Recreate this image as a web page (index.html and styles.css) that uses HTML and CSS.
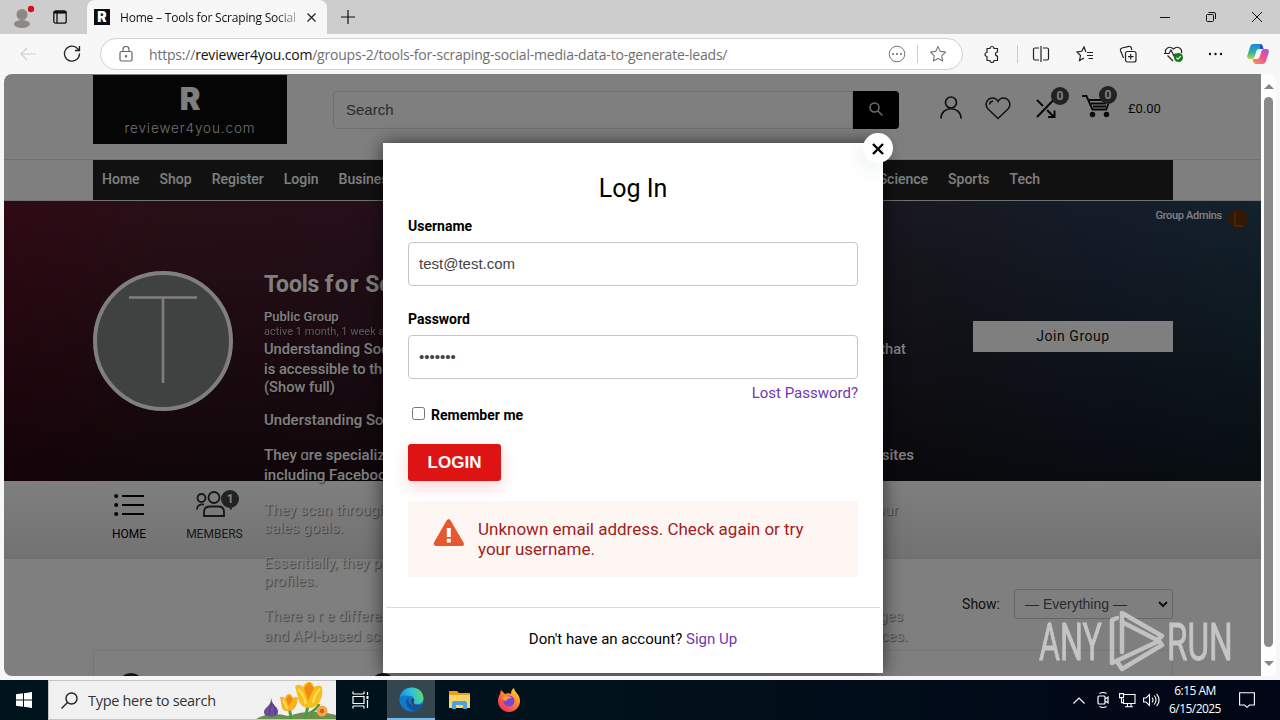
FILE: index.html
```html
<!DOCTYPE html>
<html lang="en">
<head>
    <meta charset="UTF-8">
    <title>Home – Tools for Scraping Social</title>
    <meta name="viewport" content="width=device-width, initial-scale=1.0">
    <link rel="stylesheet" href="styles.css">
</head>

<body>
    <div class="tabstrip">
        <svg class="profile" width="26" height="30" viewBox="0 0 26 30">
            <circle cx="13" cy="12.500" r="5.500" fill="#8c8884"/>
            <ellipse cx="13" cy="22" rx="8" ry="4" fill="#8c8884"/>
            <circle cx="22" cy="7" r="3.200" fill="#d4101f"/>
        </svg>
        <svg class="workspaces" width="14" height="14" viewBox="0 0 14 14" fill="none" stroke="#111" stroke-width="1.300">
            <rect x=".8" y=".8" width="12.400" height="12.400" rx="2"/>
            <path d="M1 2.300h12" stroke-width="2.600"/><path d="M4 3v10"/>
        </svg>
        <div class="tab">
            <span class="favicon">R</span>
            <span class="tab-title">Home – Tools for Scraping Social</span>
            <svg width="9" height="9" viewBox="0 0 9 9" stroke="#222" stroke-width="1.200"><path d="M.5.5l8 8M8.500.5l-8 8"/></svg>
        </div>
        <svg class="new-tab" width="14" height="14" viewBox="0 0 14 14" stroke="#111" stroke-width="1.200"><path d="M7 0v14M0 7h14"/></svg>
        <div class="window-buttons">
            <svg width="10" height="10" viewBox="0 0 10 10" stroke="#111"><path d="M0 5.500h10"/></svg>
            <svg width="10" height="10" viewBox="0 0 10 10" stroke="#111" fill="none"><rect x=".5" y="2.500" width="7" height="7" rx="1"/><path d="M2.500.5H8a1.500 1.500 0 0 1 1.500 1.500v5"/></svg>
            <svg width="10" height="10" viewBox="0 0 10 10" stroke="#111"><path d="M0 0l10 10M10 0L0 10"/></svg>
        </div>
    </div>

    <div class="toolbar">
        <svg class="back" width="16" height="14" viewBox="0 0 16 14" fill="none" stroke="#cfcfcf" stroke-width="1.200"><path d="M16 7H1M7 1L1 7l6 6"/></svg>
        <svg class="reload" width="18" height="18" viewBox="0 0 18 18" fill="none" stroke="#222" stroke-width="1.300"><path d="M16.500 8.500a7.500 7.500 0 1 1-2-5l2 2M16.500 1v4.500H12"/></svg>
        <div class="address">
            <svg width="14" height="16" viewBox="0 0 14 16" fill="none" stroke="#666" stroke-width="1.200"><rect x="1" y="5.500" width="12" height="9.500" rx="1.500"/><path d="M4 5.500V3.500a3 3 0 0 1 6 0v2"/><circle cx="7" cy="10.300" r=".6" fill="#666"/></svg>
            <span class="url">https://<b>reviewer4you.com</b>/groups-2/tools-for-scraping-social-media-data-to-generate-leads/</span>
            <svg class="addr-more" width="18" height="18" viewBox="0 0 18 18" fill="none" stroke="#777"><circle cx="9" cy="9" r="7.800"/><g fill="#666" stroke="none"><circle cx="5" cy="9" r="1"/><circle cx="9" cy="9" r="1"/><circle cx="13" cy="9" r="1"/></g></svg>
            <i class="sep"></i>
            <svg width="18" height="18" viewBox="0 0 18 18" fill="none" stroke="#777" stroke-width="1.100" stroke-linejoin="round"><path d="M9 1.500l2.300 4.900 5.300.7-3.900 3.700 1 5.300L9 13.500l-4.700 2.600 1-5.300L1.400 7.100l5.300-.7z"/></svg>
        </div>
        <div class="tools">
            <svg width="18" height="18" viewBox="0 0 18 18" fill="none" stroke="#222" stroke-width="1.200" stroke-linejoin="round"><path d="M4 3.500h3a2 2 0 0 1 4 0h3.500V7a1.900 1.900 0 0 0 0 4v4.500H11a2 2 0 0 1-4 0H4V11.500a2 2 0 0 1 0-4z"/></svg>
            <i class="sep"></i>
            <svg class="split" width="18" height="18" viewBox="0 0 18 18" fill="none" stroke="#222" stroke-width="1.200"><path d="M7 3H3a1.500 1.500 0 0 0-1.500 1.500v9A1.500 1.500 0 0 0 3 15h4M11 3h4a1.500 1.500 0 0 1 1.500 1.500v9A1.500 1.500 0 0 1 15 15h-4M9 1v16"/></svg>
            <svg width="18" height="18" viewBox="0 0 18 18" fill="none" stroke="#222" stroke-width="1.200"><path d="M10 7L8 2 5.700 6.300l-4.700.7 3.500 3.500-1 5L8 13M11 7.500h6M11 10.500h6M12.500 13.500H17"/></svg>
            <svg width="18" height="18" viewBox="0 0 18 18" fill="none" stroke="#222" stroke-width="1.200"><rect x="6.500" y="6.500" width="10.500" height="10.500" rx="2"/><path d="M11.700 9v5.500M9 11.700h5.500M4.500 13L1.500 5.500A2 2 0 0 1 3 3l7-1.700A2 2 0 0 1 12.300 3l.5 2"/></svg>
            <svg class="health" width="20" height="18" viewBox="0 0 20 18" fill="none" stroke="#222" stroke-width="1.200"><path d="M1.800 8C0 4 5.500 0 9.500 4c4-4 9.500 0 7.800 4M0 8.500h5l2-3.500 3 6 1.500-2.500M3.500 10.500L9 16"/><circle cx="14.500" cy="12.500" r="4.500" fill="#107c10" stroke="none"/><path d="M12.300 12.600l1.700 1.600 2.700-3" stroke="#fff"/></svg>
            <svg width="18" height="18" viewBox="0 0 18 18" fill="#111"><circle cx="5" cy="9" r="1.200"/><circle cx="10.500" cy="9" r="1.200"/><circle cx="16" cy="9" r="1.200"/></svg>
            <svg class="copilot" width="22" height="20" viewBox="0 0 22 20">
                <defs>
                    <linearGradient id="cp1" x1="0" y1="0" x2="0" y2="1"><stop offset="0" stop-color="#1389e8"/><stop offset=".6" stop-color="#35b59b"/><stop offset="1" stop-color="#d8cf3c"/></linearGradient>
                    <linearGradient id="cp2" x1="1" y1="0" x2="0" y2="1"><stop offset="0" stop-color="#a84be0"/><stop offset=".5" stop-color="#f0588c"/><stop offset="1" stop-color="#fb9a4c"/></linearGradient>
                </defs>
                <path d="M6 0h7q2 0 2.600 2l.9 3H12q-2 0-2.600 2L7.500 13q-.6 2-2.500 2H2.500Q-.5 15 .3 11.500L3 3Q3.800 0 6 0z" fill="url(#cp1)"/>
                <path d="M16 20H9q-2 0-2.600-2l-.9-3H10q2 0 2.600-2l1.900-6q.6-2 2.500-2h2.500q3 0 2.200 3.500L19 17q-.8 3-3 3z" fill="url(#cp2)"/>
                <path d="M13 0q2 0 2.600 2l.9 3H13z" fill="#2352c8"/>
            </svg>
        </div>
    </div>

    <div class="window">
        <div class="viewport">
            <header class="site-header">
                <div class="logo">
                    <span class="logo-mark">R</span>
                    <span class="logo-name">reviewer4you.com</span>
                </div>
                <div class="search">
                    <span class="search-field">Search</span>
                    <span class="search-button">
                        <svg width="14" height="14" viewBox="0 0 14 14" fill="none" stroke="#ddd" stroke-width="1.500"><circle cx="5.500" cy="5.500" r="4.500"/><path d="M9 9l4.500 4.500"/></svg>
                    </span>
                </div>
                <div class="header-icons">
                    <svg width="22" height="23" viewBox="0 0 22 23" fill="none" stroke="#222" stroke-width="1.700"><circle cx="11" cy="6.500" r="5.500"/><path d="M1 22.500c0-13 20-13 20 0"/></svg>
                    <svg class="heart" width="26" height="23" viewBox="0 0 26 23" fill="none" stroke="#222" stroke-width="1.500"><path d="M13 21.500L3 12C-1.500 7 3 1 7.500 1 10 1 12 2.500 13 4.500 14 2.500 16 1 18.500 1 23 1 27.500 7 23 12z"/><path d="M4.500 7.500Q5 4.500 8 4"/></svg>
                    <span class="icon-count">
                        <svg width="20" height="21" viewBox="0 0 20 21" fill="none" stroke="#111" stroke-width="2"><path d="M1 19L17 2.500M1 2l6 6M11 12l7 7M12 19h6.500V12.500"/></svg>
                        <b class="count">0</b>
                    </span>
                    <span class="icon-count cart">
                        <svg width="30" height="24" viewBox="0 0 30 24" fill="none" stroke="#111" stroke-width="1.900"><path d="M0 2h4.500l6 13.500H25M6 6h21.500L24.500 15M9 9.500h15M11 12.500h13"/><circle cx="10.500" cy="20.500" r="1.800" fill="#222"/><circle cx="24.500" cy="20.500" r="1.800" fill="#222"/></svg>
                        <b class="count">0</b>
                    </span>
                    <span class="price">£0.00</span>
                </div>
            </header>

            <div class="nav-row">
                <nav class="nav">
                    <div class="nav-group"><a>Home</a><a>Shop</a><a>Register</a><a>Login</a><a>Business</a></div>
                    <div class="nav-group"><a>Science</a><a>Sports</a><a>Tech</a></div>
                </nav>
            </div>

            <section class="hero">
                <div class="admins"><span>Group Admins</span>
                    <svg width="20" height="20" viewBox="0 0 20 20"><circle cx="10" cy="10" r="10" fill="#623206"/><path d="M7 3v14h8" fill="none" stroke="#a06a10" stroke-width="1"/></svg>
                </div>
                <div class="hero-row">
                    <div class="avatar">
                        <svg width="68" height="88" viewBox="0 0 68 88" stroke="#fff" stroke-width="2.600"><path d="M0 1.500h68M34 1.500V87"/></svg>
                    </div>
                    <div class="group-text">
                        <h1>Tools <span class="wide">for</span> Scraping</h1>
                        <div class="status">Public Group</div>
                        <div class="activity">active 1 month, 1 week ago</div>
                        <p class="lead">
                            <span class="line to-642"><span>Understanding Social</span><span>that</span></span>
                            <span class="line">is accessible to the</span>
                            <span class="line">(Show full)</span>
                        </p>
                        <p class="sub"><span class="line">Understanding Social</span></p>
                        <p class="spec">
                            <span class="line to-650"><span>They ɑre specialized</span><span>sites</span></span>
                            <span class="line">including Facebook</span>
                        </p>
                        <p class="tight">
                            <span class="line to-634"><span>They scan through</span><span>your</span></span>
                            <span class="line">sales goals.</span>
                        </p>
                        <p class="tight">
                            <span class="line">Essentially, they pull</span>
                            <span class="line">profiles.</span>
                        </p>
                        <p class="last">
                            <span class="line to-639"><span>There a r e different</span><span>pages</span></span>
                            <span class="line to-644"><span>and API-based scra</span><span>services.</span></span>
                        </p>
                    </div>
                    <a class="join">Join Group</a>
                </div>
            </section>

            <div class="group-tabs">
                <a class="group-tab home">
                    <svg width="30" height="24" viewBox="0 0 30 24" stroke="#000" stroke-width="1.800"><path d="M8 3h22M8 12h22M8 21h22"/><g stroke="none"><circle cx="2.200" cy="3" r="2"/><circle cx="2.200" cy="12" r="2"/><circle cx="2.200" cy="21" r="2"/></g></svg>
                    HOME
                </a>
                <a class="group-tab members">
                    <svg width="36" height="28" viewBox="0 0 36 28" fill="none" stroke="#2c2c2c" stroke-width="1.800"><circle cx="5.500" cy="8" r="4"/><circle cx="18" cy="7.500" r="5.500"/><path d="M8 26v-4q0-5.500 6-5.500h8.500q5.500 0 5.500 5.500v4zM1 19.500q0-5.500 7-5M35 19.500q0-3-2-4.500"/></svg>
                    MEMBERS
                    <b class="count">1</b>
                </a>
            </div>

            <div class="filter">
                <label>Show:</label>
                <span class="select">— Everything —
                    <svg width="10" height="7" viewBox="0 0 10 7" fill="none" stroke="#222" stroke-width="2"><path d="M1 1l4 4 4-4"/></svg>
                </span>
            </div>
            <div class="stream"><i></i><i></i></div>

            <div class="shade"></div>

            <div class="modal">
                <button class="close"><svg width="12" height="12" viewBox="0 0 12 12" stroke="#000" stroke-width="2.400"><path d="M1 1l10 10M11 1L1 11"/></svg></button>
                <h2>Log In</h2>
                <label class="label">Username</label>
                <input class="field" type="text" value="test@test.com">
                <label class="label second">Password</label>
                <input class="field" type="password" value="1234567">
                <a class="lost">Lost Password?</a>
                <label class="remember"><input type="checkbox">Remember me</label>
                <button class="login">LOGIN</button>
                <div class="error">
                    <svg width="32" height="28" viewBox="0 0 32 28"><path d="M13.600 1.500q2-3 4 0L30.500 23.500q1.500 3-1.500 3.500H3q-3-.5-2-3.500z" fill="#e6592f"/><path d="M13.800 9h4v9h-4zM13.800 19.800h4V23.500h-4z" fill="#fff"/></svg>
                    <span>Unknown email address. Check again or try your username.</span>
                </div>
                <div class="signup">Don't have an account? <a>Sign Up</a></div>
            </div>

            <svg class="watermark" width="210" height="62" viewBox="0 0 210 62">
                <g fill="#d2d2d2" stroke="#d2d2d2" stroke-width=".8" font-family="Roboto, sans-serif" font-size="52">
                    <text transform="translate(1 49.500) scale(.62 1)">ANY</text>
                    <text transform="translate(129 49.500) scale(.64 1)">RUN</text>
                </g>
                <g fill="none" stroke="#cdcdcd" stroke-width="4.500" stroke-linejoin="round" stroke-linecap="round">
                    <path d="M79 8l-5 2v43l47-22-37-19"/>
                    <path d="M84 42V3l40 23-5 4M80 53l4 6 40-24-3-4"/>
                </g>
            </svg>
        </div>
        <div class="scrollbar">
            <i class="arrow up"></i>
            <i class="thumb"></i>
            <i class="arrow down"></i>
        </div>
    </div>

    <div class="taskbar">
        <div class="start"><svg width="16" height="16" viewBox="0 0 16 16" fill="#fff"><path d="M0 2.300L7 1.300V7.500H0zM8 1.200L16 0v7.500H8zM0 8.500h7v6.200l-7-1zM8 8.500h8V16l-8-1.200z"/></svg></div>
        <div class="task-search">
            <svg width="17" height="17" viewBox="0 0 17 17" fill="none" stroke="#222" stroke-width="1.400"><circle cx="10.500" cy="6.500" r="5.500"/><path d="M6.500 10.500L.5 16.500"/></svg>
            <span>Type here to search</span>
            <svg class="flowers" width="80" height="38" viewBox="0 0 80 38">
                <path d="M0 38Q14 30 32 35 56 27 80 34v4z" fill="#6b8f4d"/>
                <path d="M15 17q1 6 6 10 3 6-2 8-6 2-10-1-3-4 2-8 4-3 4-9z" fill="#6d4d96"/>
                <path d="M16 22q-3 6-3 12M17 23q4 6 2 11" stroke="#51377c" fill="none"/>
                <path d="M35 38q-1-8-2-12M49 38q2-8 3-14M54 32q8-5 9-9" stroke="#4f9a3e" stroke-width="3" fill="none"/>
                <path d="M24 16q4-1 5 2 1-5 4-5t4 4q3-2 5 0-1 9-5 12-9 3-11-2z" fill="#f6b51e"/>
                <path d="M39 5q5-3 8 1 2-5 6-5t5 5q5-3 8 0 2 16-10 21-12 1-14-10z" fill="#fbbd1b"/>
                <path d="M48 7l4 13 6-13-5-6zM30 18l3 7 4-7-4-4z" fill="#ef8d12"/>
                <path d="M42 8q5 4 8 15M64 8q-6 6-7 14M27 19q3 4 4 9" stroke="#ffe063" fill="none" stroke-width="2"/>
                <circle cx="66" cy="30" r="5.500" fill="#f4a545"/><circle cx="66" cy="30" r="2.200" fill="#c8671a"/>
            </svg>
        </div>
        <div class="task-icon"><svg width="18" height="18" viewBox="0 0 18 18" fill="none" stroke="#fff" stroke-width="1.200"><path d="M1 3V.5M12 3V.5M1 3h11M1 5.500h11v7H1zM1 15h11M1 15v2.500M12 15v2.500M15.500 1v3M15.500 9v8"/><path d="M14.500 5h2v3h-2z" fill="#fff" stroke="none"/></svg></div>
        <div class="task-icon active">
            <svg width="25" height="25" viewBox="0 0 24 24">
                <defs>
                    <linearGradient id="edge" x1="0" y1=".5" x2="1" y2=".3"><stop offset="0" stop-color="#1c87d8"/><stop offset=".5" stop-color="#2cc1df"/><stop offset="1" stop-color="#65dc62"/></linearGradient>
                </defs>
                <circle cx="12" cy="12" r="11.500" fill="#137bcb"/>
                <path d="M.6 11C2-3 23-3 23.500 11c0 6-8 6.500-9.500 4 2-3 0-7-5-6.500C5 9 1.500 9 .6 11z" fill="url(#edge)"/>
                <path d="M9.500 9C5 12 7 22 15.500 23 8 24.500 0 18 .6 11 2 7.500 7 7.500 9.500 9z" fill="#1478cb"/>
                <path d="M9.500 10c-2 5 3 10 12 7.500-2 4-5 5.500-8 5.300C6 19 5 13 9.500 10z" fill="#12539f"/>
                <path d="M14 15c1.500 3 5 3 8.600 1.400L21.500 18c-5 2-9 0-10-3.500-.5-2 .5-3.500 1.500-4 2 1 2 3 1 4.500z" fill="#35474e"/>
            </svg>
        </div>
        <div class="task-icon">
            <svg width="22" height="20" viewBox="0 0 22 20"><path d="M0 1h8l2 2h11v4H0z" fill="#e9a01e"/><path d="M0 5h21v13H0z" fill="#fcd462"/><path d="M3 19v-6q0-2 2-2h11q2 0 2 2v6h-4v-4H7v4z" fill="#4aa3df"/></svg>
        </div>
        <div class="task-icon">
            <svg width="24" height="24" viewBox="0 0 24 24">
                <defs><linearGradient id="fox" x1="1" y1="0" x2=".2" y2="1"><stop offset="0" stop-color="#ffe83f"/><stop offset=".45" stop-color="#ff8a2a"/><stop offset="1" stop-color="#f0286a"/></linearGradient></defs>
                <path d="M3 6l1-4 4 4c2-1 5-1 6 0 0-3 1-5 3-6 0 4 6 6 6 13 0 6-5 11-11 11S1 19 1 13c0-3 1-5 2-7z" fill="url(#fox)"/>
                <circle cx="12" cy="13" r="5.500" fill="#7645d9"/>
                <path d="M6 9c3-2 7-1 9 1-3 0-5 1-6 3-2 0-4-2-3-4z" fill="#ff9a31"/>
            </svg>
        </div>
        <div class="tray">
            <svg width="12" height="7" viewBox="0 0 12 7" fill="none" stroke="#fff" stroke-width="1.200"><path d="M.5 6.500L6 1l5.500 5.500"/></svg>
            <svg width="12" height="18" viewBox="0 0 12 18" fill="none" stroke="#fff" stroke-width="1.200"><rect x="1" y="5" width="7" height="8" rx="1"/><path d="M8 8l3-2v6l-3-2M2.500 2.500q3.500-2 7 0M2.500 15.500q3.500 2 7 0"/></svg>
            <svg width="17" height="15" viewBox="0 0 17 15" fill="none" stroke="#fff" stroke-width="1.100"><path d="M4.500 1.500H16v9H4.500V6M8.500 10.500v3M12 10.500v3M6 13.800h8M.5.6h4v4h-4zM2.500 4.600v5h2"/></svg>
            <svg width="17" height="14" viewBox="0 0 17 14" fill="none" stroke="#fff" stroke-width="1.100"><path d="M.6 5v4h2.500L6.500 12.500v-11L3.100 5zM9 4.500q2 2.500 0 5M11.300 2.500q3.500 4.500 0 9M13.600.8q5 6.200 0 12.400"/></svg>
            <div class="clock"><span>6:15 AM</span><span>6/15/2025</span></div>
            <svg width="16" height="16" viewBox="0 0 16 16" fill="none" stroke="#fff" stroke-width="1.100"><path d="M.6.8h14.800V13H10.500L8 15.300 5.500 13H.6z"/></svg>
        </div>
    </div>
</body>

</html>
```
FILE: styles.css
```css
* {
    box-sizing: border-box;
}

body {
    margin: 0;
    width: 1280px;
    height: 720px;
    overflow: hidden;
    display: flex;
    flex-direction: column;
    background: #f7f7f7;
    font-family: Roboto, sans-serif;
}

svg {
    display: block;
    flex: none;
}

p, h1, h2 {
    margin: 0;
}

/* Browser tabs */
.tabstrip {
    display: flex;
    align-items: center;
    height: 34px;
    background: #cdcdcd;
    font-family: "Open Sans", sans-serif;
}

.profile {
    margin-left: 9px;
}

.workspaces {
    margin-left: 18px;
}

.tab {
    display: flex;
    align-items: center;
    align-self: stretch;
    width: 240px;
    margin-left: 20px;
    padding-left: 7px;
    background: #f7f7f7;
    border-radius: 8px 8px 0 0;
}

.favicon {
    width: 16px;
    height: 16px;
    background: #0c0c18;
    color: #fff;
    font: 900 14px/16px Inter, sans-serif;
    text-align: center;
}

.tab-title {
    width: 177px;
    margin: 0 10px 0 10px;
    overflow: hidden;
    white-space: nowrap;
    font-size: 12px;
    letter-spacing: -0.19px;
    background: linear-gradient(90deg, #111 88%, #bbb);
    -webkit-background-clip: text;
    color: transparent;
}

.new-tab {
    margin-left: 14px;
}

.window-buttons {
    display: flex;
    gap: 36px;
    margin: 0 18px 0 auto;
}

/* Address bar */
.toolbar {
    display: flex;
    align-items: center;
    height: 40px;
    flex: none;
    font-family: "Open Sans", sans-serif;
}

.back {
    margin-left: 20px;
}

.reload {
    margin-left: 27px;
}

.address {
    display: flex;
    align-items: center;
    width: 863px;
    height: 32px;
    margin-left: 19px;
    padding: 0 15px 0 18px;
    border: 1px solid #d2d2d2;
    border-radius: 16px;
    background: #fff;
}

.url {
    margin-left: 16px;
    color: #6f6f6f;
    font-size: 14px;
    letter-spacing: -0.2px;
    white-space: nowrap;
}

.url b {
    color: #111;
    font-weight: 400;
}

.addr-more {
    margin-left: auto;
}

.sep {
    width: 1px;
    height: 18px;
    margin: 0 11px;
    background: #ccc;
}

.tools {
    display: flex;
    align-items: center;
    justify-content: space-between;
    flex: 1;
    padding: 0 11px 0 20px;
}

.tools .sep {
    margin: 0 -8px;
}

.split {
    margin: 0 2px 0 -2px;
}

.health {
    margin-right: -3px;
    margin-left: 3px;
}

/* Page */
.window {
    display: flex;
    height: 606px;
    flex: none;
    padding: 0 4px 4px;
}

.viewport {
    position: relative;
    width: 1257px;
    height: 602px;
    overflow: hidden;
    background: #fff;
    border-radius: 8px 0 0 8px;
}

.scrollbar {
    display: flex;
    flex-direction: column;
    align-items: center;
    width: 15px;
    height: 602px;
    padding: 10px 0 9px;
    background: #fdfdfd;
    border-radius: 0 8px 8px 0;
}

.arrow {
    border: 5px solid transparent;
}

.up {
    border-top: 0;
    border-bottom-color: #858585;
}

.down {
    border-bottom: 0;
    border-top-color: #858585;
}

.thumb {
    width: 9px;
    height: 550px;
    margin: 8px 0 14px;
    border-radius: 5px;
    background: #8a8a8a;
}

.site-header {
    display: flex;
    height: 86px;
    padding: 1px 0 0 89px;
    border-bottom: 1px solid #e4e4e4;
}

.logo {
    display: flex;
    flex-direction: column;
    align-items: center;
    width: 194px;
    height: 69px;
    background: #0b0b0b;
    color: #fff;
}

.logo-mark {
    margin-top: 8px;
    font: 900 31px/32px Inter, sans-serif;
}

.logo-name {
    margin-top: 4px;
    color: #ddd;
    font: 300 13.5px/18px Inter, sans-serif;
    letter-spacing: .9px;
}

.search {
    display: flex;
    width: 566px;
    height: 38px;
    margin: 16px 0 0 46px;
}

.search-field {
    flex: 1;
    padding-left: 12px;
    border: 1px solid #dcdcdc;
    border-radius: 4px 0 0 4px;
    color: #555;
    font: 15px/36px "Liberation Sans", sans-serif;
}

.search-button {
    display: flex;
    align-items: center;
    justify-content: center;
    width: 46px;
    padding-bottom: 3px;
    background: #000;
    border-radius: 0 4px 4px 0;
}

.header-icons {
    display: flex;
    align-items: flex-start;
    margin: 21px 0 0 41px;
}

.heart {
    margin: 1px 25px 0 23px;
}

.icon-count {
    position: relative;
    margin-top: 2px;
}

.cart {
    margin: -2px 16px 0 26px;
}

.count {
    position: absolute;
    width: 18px;
    height: 18px;
    border-radius: 50%;
    background: #444;
    color: #fff;
    font-size: 12px;
    line-height: 18px;
    text-align: center;
}

.icon-count .count {
    left: 15px;
    top: -11px;
}

.cart .count {
    left: 17px;
    top: -8px;
}

.price {
    margin-top: 5px;
    color: #111;
    font-size: 13px;
    line-height: 16px;
}

.nav-row {
    padding: 0 88px 0 89px;
    border-bottom: 1px solid #e4e4e4;
}

.nav {
    display: flex;
    justify-content: space-between;
    height: 40px;
    padding: 0 133px 0 9px;
    background: #222;
    color: #fff;
    font-size: 14px;
    font-weight: 500;
    line-height: 39px;
}

.nav-group {
    display: flex;
    gap: 20px;
}

.hero {
    position: relative;
    z-index: 1;
    height: 280px;
    background:
        linear-gradient(rgba(0, 0, 0, 0), rgba(0, 0, 0, .6)),
        linear-gradient(90deg, #60142a, #521f2e 12%, #4c2034 30%, #3a2840 55%, #303242 75%, #2a3a54 88%, #264458);
    color: #fff;
}

.admins {
    display: flex;
    align-items: flex-start;
    justify-content: flex-end;
    gap: 6px;
    padding: 8px 13px 0;
    font-size: 11px;
    font-weight: 500;
    line-height: 13px;
    letter-spacing: -0.3px;
}

.hero-row {
    display: flex;
    align-items: flex-start;
    margin-top: 40px;
    padding-left: 89px;
}

.avatar {
    display: flex;
    justify-content: center;
    width: 140px;
    height: 140px;
    margin-top: 2px;
    padding-top: 21px;
    border: 4px solid #fff;
    border-radius: 50%;
    background: #808483;
}

.group-text {
    width: 650px;
    margin-left: 31px;
    font-size: 15px;
    text-shadow: 1px 1px 1px rgba(0, 0, 0, .5);
}

h1 {
    margin-bottom: 8px;
    font-size: 23px;
    line-height: 30px;
    letter-spacing: -0.2px;
    white-space: nowrap;
}

.wide {
    font-size: 24px;
    letter-spacing: 1.4px;
}

.status {
    font-size: 13px;
    font-weight: 500;
    line-height: 17px;
}

.activity {
    font-size: 11px;
    line-height: 13px;
    opacity: .65;
}

.line {
    display: flex;
    justify-content: space-between;
    line-height: 20px;
}

.to-634 { width: 634px; }
.to-639 { width: 639px; }
.to-642 { width: 642px; }
.to-644 { width: 644px; }
.to-650 { width: 650px; }

.lead, .sub, .spec {
    font-weight: 500;
}

.lead {
    padding-top: 1px;
    font-size: 14.7px;
}

.lead .line:last-child {
    line-height: 17px;
}

.sub {
    margin-top: 14px;
}

.spec {
    margin-top: 15px;
}

.tight {
    margin-top: 16px;
}

.tight .line {
    line-height: 18px;
}

.tight + .tight {
    margin-top: 17px;
}

.last {
    margin-top: 16px;
}

.join {
    width: 200px;
    height: 31px;
    margin: 52px 0 0 59px;
    background: #fff;
    color: #111;
    font-size: 14px;
    line-height: 31px;
    letter-spacing: .55px;
    text-align: center;
}

.group-tabs {
    display: flex;
    gap: 40px;
    height: 78px;
    padding: 12px 0 0 108px;
    background: linear-gradient(#fff, #e4e4e4);
    border-bottom: 1px solid #dcdcdc;
    font-size: 12px;
}

.group-tab {
    position: relative;
    display: flex;
    flex-direction: column;
    align-items: center;
    line-height: 14px;
}

.home {
    gap: 10px;
    color: #000;
}

.members {
    margin-top: -3px;
    gap: 9px;
    color: #333;
}

.group-tab .count {
    left: 35px;
    top: 0;
}

.filter {
    display: flex;
    align-items: center;
    justify-content: flex-end;
    gap: 14px;
    padding: 30px 88px 0 0;
    color: #222;
    font-size: 14px;
}

.select {
    display: flex;
    align-items: center;
    justify-content: space-between;
    width: 159px;
    height: 30px;
    padding: 0 4px 0 10px;
    border: 1px solid #ccc;
    border-radius: 3px;
    color: #555;
    font-family: "Liberation Sans", sans-serif;
}

.stream {
    display: flex;
    gap: 226px;
    height: 60px;
    margin: 31px 88px 0 89px;
    padding: 22px 0 0 24px;
    border: 1px solid #ececec;
}

.stream i {
    width: 26px;
    height: 26px;
    border-radius: 50%;
    background: #222;
}

/* Dark layer under the popup */
.shade {
    position: absolute;
    inset: 0;
    z-index: 2;
    background: rgba(0, 0, 0, .5);
}

/* Login popup */
.modal {
    position: absolute;
    z-index: 3;
    left: 379px;
    top: 69px;
    display: flex;
    flex-direction: column;
    align-items: flex-start;
    width: 500px;
    height: 530px;
    padding: 31px 25px 0;
    background: #fff;
    box-shadow: 0 0 18px rgba(0, 0, 0, .6);
    color: #000;
}

.close {
    position: absolute;
    right: -10px;
    top: -10px;
    display: flex;
    align-items: center;
    justify-content: center;
    width: 30px;
    height: 30px;
    padding: 1px 1px 0 0;
    border: 0;
    border-radius: 50%;
    background: #fff;
    box-shadow: -6px 8px 20px rgba(0, 60, 60, .06);
}

h2 {
    align-self: center;
    font-size: 25px;
    font-weight: 400;
    line-height: 30px;
}

.label {
    margin-top: 14px;
    font-size: 14px;
    font-weight: 700;
    line-height: 16px;
}

.second {
    margin-top: 25px;
}

.field {
    width: 450px;
    height: 44px;
    margin-top: 8px;
    padding: 0 10px 2px;
    border: 1px solid #c4c6c9;
    border-radius: 4px;
    color: #444;
    font: 15px "Liberation Sans", sans-serif;
}

.lost {
    align-self: flex-end;
    margin-top: 5px;
    color: #7037b0;
    font-size: 15px;
    line-height: 18px;
}

.remember {
    display: flex;
    align-items: center;
    gap: 6px;
    height: 18px;
    margin-top: 4px;
    font-size: 14px;
    font-weight: 700;
}

.remember input {
    width: 13px;
    height: 13px;
    margin: -3px 0 0 4px;
}

.login {
    width: 93px;
    height: 37px;
    margin-top: 20px;
    padding: 0;
    border: 0;
    border-radius: 3px;
    background: #de1414;
    box-shadow: 0 6px 16px rgba(222, 20, 20, .18);
    color: #fff;
    font: 700 17px "Liberation Sans", sans-serif;
}

.error {
    display: flex;
    gap: 13px;
    width: 450px;
    height: 76px;
    margin-top: 20px;
    padding: 18px 30px 0 25px;
    background: #fef6f3;
    color: #a02222;
    font-size: 17px;
    line-height: 20px;
}

.signup {
    align-self: center;
    width: 494px;
    margin-top: 30px;
    padding-top: 22px;
    border-top: 1px solid #dadcde;
    font-size: 15px;
    line-height: 18px;
    text-align: center;
}

.signup a {
    color: #7037b0;
}

.watermark {
    position: absolute;
    z-index: 4;
    left: 1034px;
    top: 536px;
    opacity: .85;
}

/* Windows taskbar */
.taskbar {
    display: flex;
    height: 40px;
    flex: none;
    background: linear-gradient(90deg, #00141d, #01111c 50%, #020616);
    color: #fff;
    font-family: "Open Sans", sans-serif;
}

.start {
    display: flex;
    align-items: center;
    justify-content: center;
    width: 48px;
}

.task-search {
    display: flex;
    align-items: center;
    width: 288px;
    padding-left: 12px;
    border: 1px solid #c4c4c4;
    border-right: 0;
    background: #f1f1f1;
    color: #333;
    font-size: 14.5px;
}

.task-search span {
    margin-left: 10px;
    letter-spacing: -0.3px;
    white-space: nowrap;
}

.flowers {
    margin-left: auto;
}

.task-icon {
    display: flex;
    align-items: center;
    justify-content: center;
    width: 49px;
}

.active {
    margin-left: 2px;
    width: 48px;
    background: #35474e;
    border-bottom: 2px solid #76b9ed;
}

.tray {
    display: flex;
    align-items: center;
    gap: 12px;
    margin-left: auto;
    padding-right: 25px;
}

.tray svg:nth-child(3) {
    margin-left: -2px;
}

.tray svg:nth-child(4) {
    margin-left: -5px;
}

.clock {
    display: flex;
    flex-direction: column;
    align-items: center;
    width: 56px;
    margin: 0 4px 0 -5px;
    font-size: 12px;
    line-height: 18px;
    letter-spacing: -0.55px;
    white-space: nowrap;
}
```
